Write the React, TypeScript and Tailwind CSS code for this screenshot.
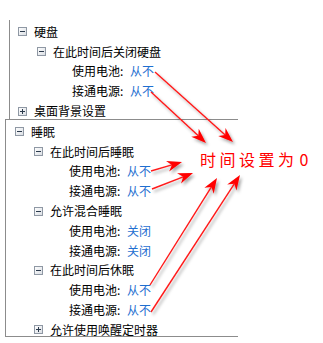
import React from 'react';

type Item = {
  level: 1 | 2 | 3;
  text: string;
  value?: string;
  box?: 'minus' | 'plus';
};

const topItems: Item[] = [
  { level: 1, text: '硬盘', box: 'minus' },
  { level: 2, text: '在此时间后关闭硬盘', box: 'minus' },
  { level: 3, text: '使用电池:', value: '从不' },
  { level: 3, text: '接通电源:', value: '从不' },
  { level: 1, text: '桌面背景设置', box: 'plus' },
];

const sleepItems: Item[] = [
  { level: 1, text: '睡眠', box: 'minus' },
  { level: 2, text: '在此时间后睡眠', box: 'minus' },
  { level: 3, text: '使用电池:', value: '从不' },
  { level: 3, text: '接通电源:', value: '从不' },
  { level: 2, text: '允许混合睡眠', box: 'minus' },
  { level: 3, text: '使用电池:', value: '关闭' },
  { level: 3, text: '接通电源:', value: '关闭' },
  { level: 2, text: '在此时间后休眠', box: 'minus' },
  { level: 3, text: '使用电池:', value: '从不' },
  { level: 3, text: '接通电源:', value: '从不' },
  { level: 2, text: '允许使用唤醒定时器', box: 'plus' },
];

const Toggle = ({ kind }: { kind: 'minus' | 'plus' }) => (
  <svg width="9" height="9" viewBox="0 0 9 9" className="shrink-0">
    <defs>
      <linearGradient id="tg" x1="0" y1="0" x2="1" y2="1">
        <stop offset="0" stopColor="#ffffff" />
        <stop offset="1" stopColor="#d9dde3" />
      </linearGradient>
    </defs>
    <rect x="0.5" y="0.5" width="8" height="8" fill="url(#tg)" stroke="#8f98a4" />
    <line x1="2" y1="4.5" x2="7" y2="4.5" stroke="#2b3a4c" />
    {kind === 'plus' && <line x1="4.5" y1="2" x2="4.5" y2="7" stroke="#2b3a4c" />}
  </svg>
);

const Row = ({ item }: { item: Item }) => {
  if (item.level === 3) {
    return (
      <div className="flex h-[19.8px] items-center pl-[62px] leading-none">
        <span className="w-[58px] shrink-0">{item.text}</span>
        <span className="text-[#1f6fd0]">{item.value}</span>
      </div>
    );
  }
  return (
    <div
      className={`flex h-[19.8px] items-center gap-[7px] leading-none ${
        item.level === 1 ? 'pl-[8px]' : 'pl-[27px]'
      }`}
    >
      <Toggle kind={item.box ?? 'minus'} />
      <span className="whitespace-nowrap">{item.text}</span>
    </div>
  );
};

type Arrow = [number, number, number, number];

const arrows: Arrow[] = [
  [155, 72, 233, 142],
  [151, 92, 206, 143],
  [151, 171, 182, 162],
  [152, 189, 193, 173],
  [150, 285, 217, 178],
  [151, 312, 240, 175],
];

const ArrowShape = ({ a }: { a: Arrow }) => {
  const [x1, y1, x2, y2] = a;
  const dx = x2 - x1;
  const dy = y2 - y1;
  const len = Math.hypot(dx, dy);
  const ux = dx / len;
  const uy = dy / len;
  const px = -uy;
  const py = ux;
  const L = 15;
  const W = 5.5;
  const bx = x2 - ux * L;
  const by = y2 - uy * L;
  const nx = x2 - ux * L * 0.7;
  const ny = y2 - uy * L * 0.7;
  const pts = [
    `${x2},${y2}`,
    `${bx + px * W},${by + py * W}`,
    `${nx},${ny}`,
    `${bx - px * W},${by - py * W}`,
  ].join(' ');
  return (
    <g>
      <line x1={x1} y1={y1} x2={nx} y2={ny} stroke="#ff1a1a" strokeWidth="1.4" />
      <polygon points={pts} fill="#ff0000" />
    </g>
  );
};

export default function App() {
  return (
    <div
      className="relative h-[343px] w-[323px] overflow-hidden bg-white text-[12px] text-black"
      style={{ fontFamily: '"Noto Sans CJK SC", "Noto Sans", sans-serif' }}
    >
      <div className="ml-[9px] mt-[20px] h-[99px] w-[229px] border-l border-[#8c8c8c] pt-[2px]">
        {topItems.map((it, i) => (
          <Row key={i} item={it} />
        ))}
      </div>

      <div className="ml-[5px] h-[218px] w-[233px] overflow-hidden border-y border-l border-[#8c8c8c] pl-[1px] pt-[2px]">
        {sleepItems.map((it, i) => (
          <Row key={i} item={it} />
        ))}
      </div>

      <svg
        className="pointer-events-none absolute left-0 top-0"
        width="323"
        height="343"
        viewBox="0 0 323 343"
      >
        <defs>
          <filter id="shadow" x="-20%" y="-20%" width="140%" height="140%">
            <feDropShadow dx="2" dy="2.5" stdDeviation="1.6" floodColor="#000000" floodOpacity="0.35" />
          </filter>
        </defs>
        <g filter="url(#shadow)">
          {arrows.map((a, i) => (
            <ArrowShape key={i} a={a} />
          ))}
        </g>
      </svg>

      <div className="absolute left-[200px] top-[150px] text-[16px] leading-[18px] tracking-[3.5px] text-[#ff0000]">
        时间设置为<span className="ml-[2px]">0</span>
      </div>
    </div>
  );
}
